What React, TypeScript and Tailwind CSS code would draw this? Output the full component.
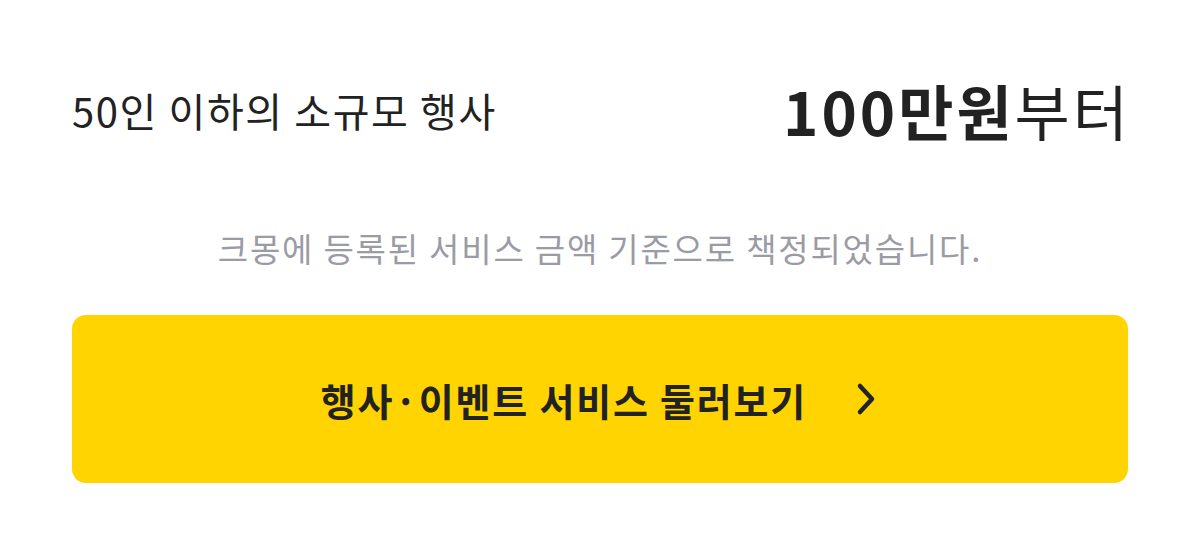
import React from 'react';

const font = { fontFamily: '"Noto Sans CJK KR", "Noto Sans", sans-serif' };

export default function App() {
  return (
    <div className="w-[1200px] h-[556px] bg-white px-[72px] pt-[72px]" style={font}>
      <div className="flex items-center justify-between h-[76px]">
        <span className="text-[40px] text-[#222222] tracking-[1.6px]">50인 이하의 소규모 행사</span>
        <span className="text-[60px] text-[#222222] tracking-[3px] -mr-[3px]">
          <b className="font-bold">100만원</b>부터
        </span>
      </div>
      <p className="mt-[78px] text-center text-[33px] text-[#9b9ba6] tracking-[1.8px] leading-[44px]">
        크몽에 등록된 서비스 금액 기준으로 책정되었습니다.
      </p>
      <button className="mt-[45px] w-full h-[168px] rounded-[14px] bg-[#ffd400] flex items-center justify-center gap-[48px] text-[#222222]">
        <span className="text-[38px] font-bold tracking-[1.8px]">행사·이벤트 서비스 둘러보기</span>
        <svg className="w-[24px] h-[34px]" viewBox="0 0 24 34" fill="none" stroke="currentColor" strokeWidth={4.5} strokeLinecap="round" strokeLinejoin="round">
          <path d="M5 4l12 13L5 30" />
        </svg>
      </button>
    </div>
  );
}
